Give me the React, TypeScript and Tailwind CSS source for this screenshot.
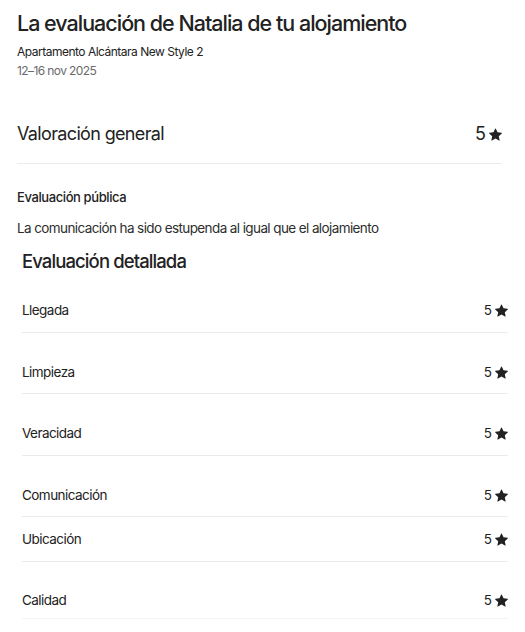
import React from 'react';

const Star = ({ size }: { size: number }) => (
  <svg width={size} height={size} viewBox="0 0 32 32" fill="#222222" aria-hidden="true">
    <path d="M15.1 1.58l-4.13 8.88-9.86 1.27a1 1 0 0 0-.54 1.74l7.3 6.57-1.97 9.85a1 1 0 0 0 1.48 1.06L16 25.98l8.63 4.96a1 1 0 0 0 1.48-1.06l-1.97-9.85 7.3-6.57a1 1 0 0 0-.55-1.73l-9.86-1.28-4.12-8.88a1 1 0 0 0-1.82 0z" />
  </svg>
);

const rows = [
  { label: 'Llegada', pad: 'pt-[26px] pb-[12px]' },
  { label: 'Limpieza', pad: 'pt-[29px] pb-[11px]' },
  { label: 'Veracidad', pad: 'pt-[29px] pb-[12px]' },
  { label: 'Comunicación', pad: 'pt-[29px] pb-[11px]' },
  { label: 'Ubicación', pad: 'pt-[12px] pb-[12px]' },
  { label: 'Calidad', pad: 'pt-[28px] pb-[8px]' },
];

const App = () => {
  return (
    <div className="min-h-screen bg-white text-[#222222] font-['Inter',sans-serif]">
      <div className="pl-[17px] pr-[23px]">
        {/* Header */}
        <h1 className="pt-[9px] text-[21.5px] leading-[28px] font-medium tracking-[-1px]">
          La evaluación de Natalia de tu alojamiento
        </h1>
        <p className="mt-[6px] text-[12px] leading-[18px] tracking-[-0.5px]">Apartamento Alcántara New Style 2</p>
        <p className="mt-[1px] text-[12px] leading-[18px] tracking-[-0.6px] text-[#6a6a6a]">12–16 nov 2025</p>

        {/* Overall */}
        <div className="mt-[42px] pb-[17px] border-b border-[#ebebeb] flex items-center justify-between">
          <span className="text-[18px] leading-[24px] tracking-[-0.65px]">Valoración general</span>
          <span className="flex items-center gap-[3px] text-[18px] leading-[24px]">
            5 <Star size={13} />
          </span>
        </div>

        {/* Public review */}
        <p className="mt-[24px] text-[13px] leading-[18px] font-medium tracking-[-0.4px]">Evaluación pública</p>
        <p className="mt-[12px] text-[13.5px] leading-[20px] tracking-[-0.6px] text-[#2e2e2e]">
          La comunicación ha sido estupenda al igual que el alojamiento
        </p>
      </div>

      {/* Detailed */}
      <div className="pl-[22px] pr-[17px]">
        <h2 className="mt-[10px] text-[18.5px] leading-[26px] font-medium tracking-[-0.9px]">Evaluación detallada</h2>
        <div>
          {rows.map((r, idx) => (
            <div
              key={idx}
              className={`${r.pad} flex items-center justify-between border-b ${
                idx === rows.length - 1 ? 'border-[#f4f4f4]' : 'border-[#ebebeb]'
              }`}
            >
              <span className="text-[13.5px] leading-[20px] tracking-[-0.55px]">{r.label}</span>
              <span className="flex items-center gap-[3px] text-[13.5px] leading-[20px]">
                5 <Star size={13} />
              </span>
            </div>
          ))}
        </div>
      </div>
    </div>
  );
};

export default App;
